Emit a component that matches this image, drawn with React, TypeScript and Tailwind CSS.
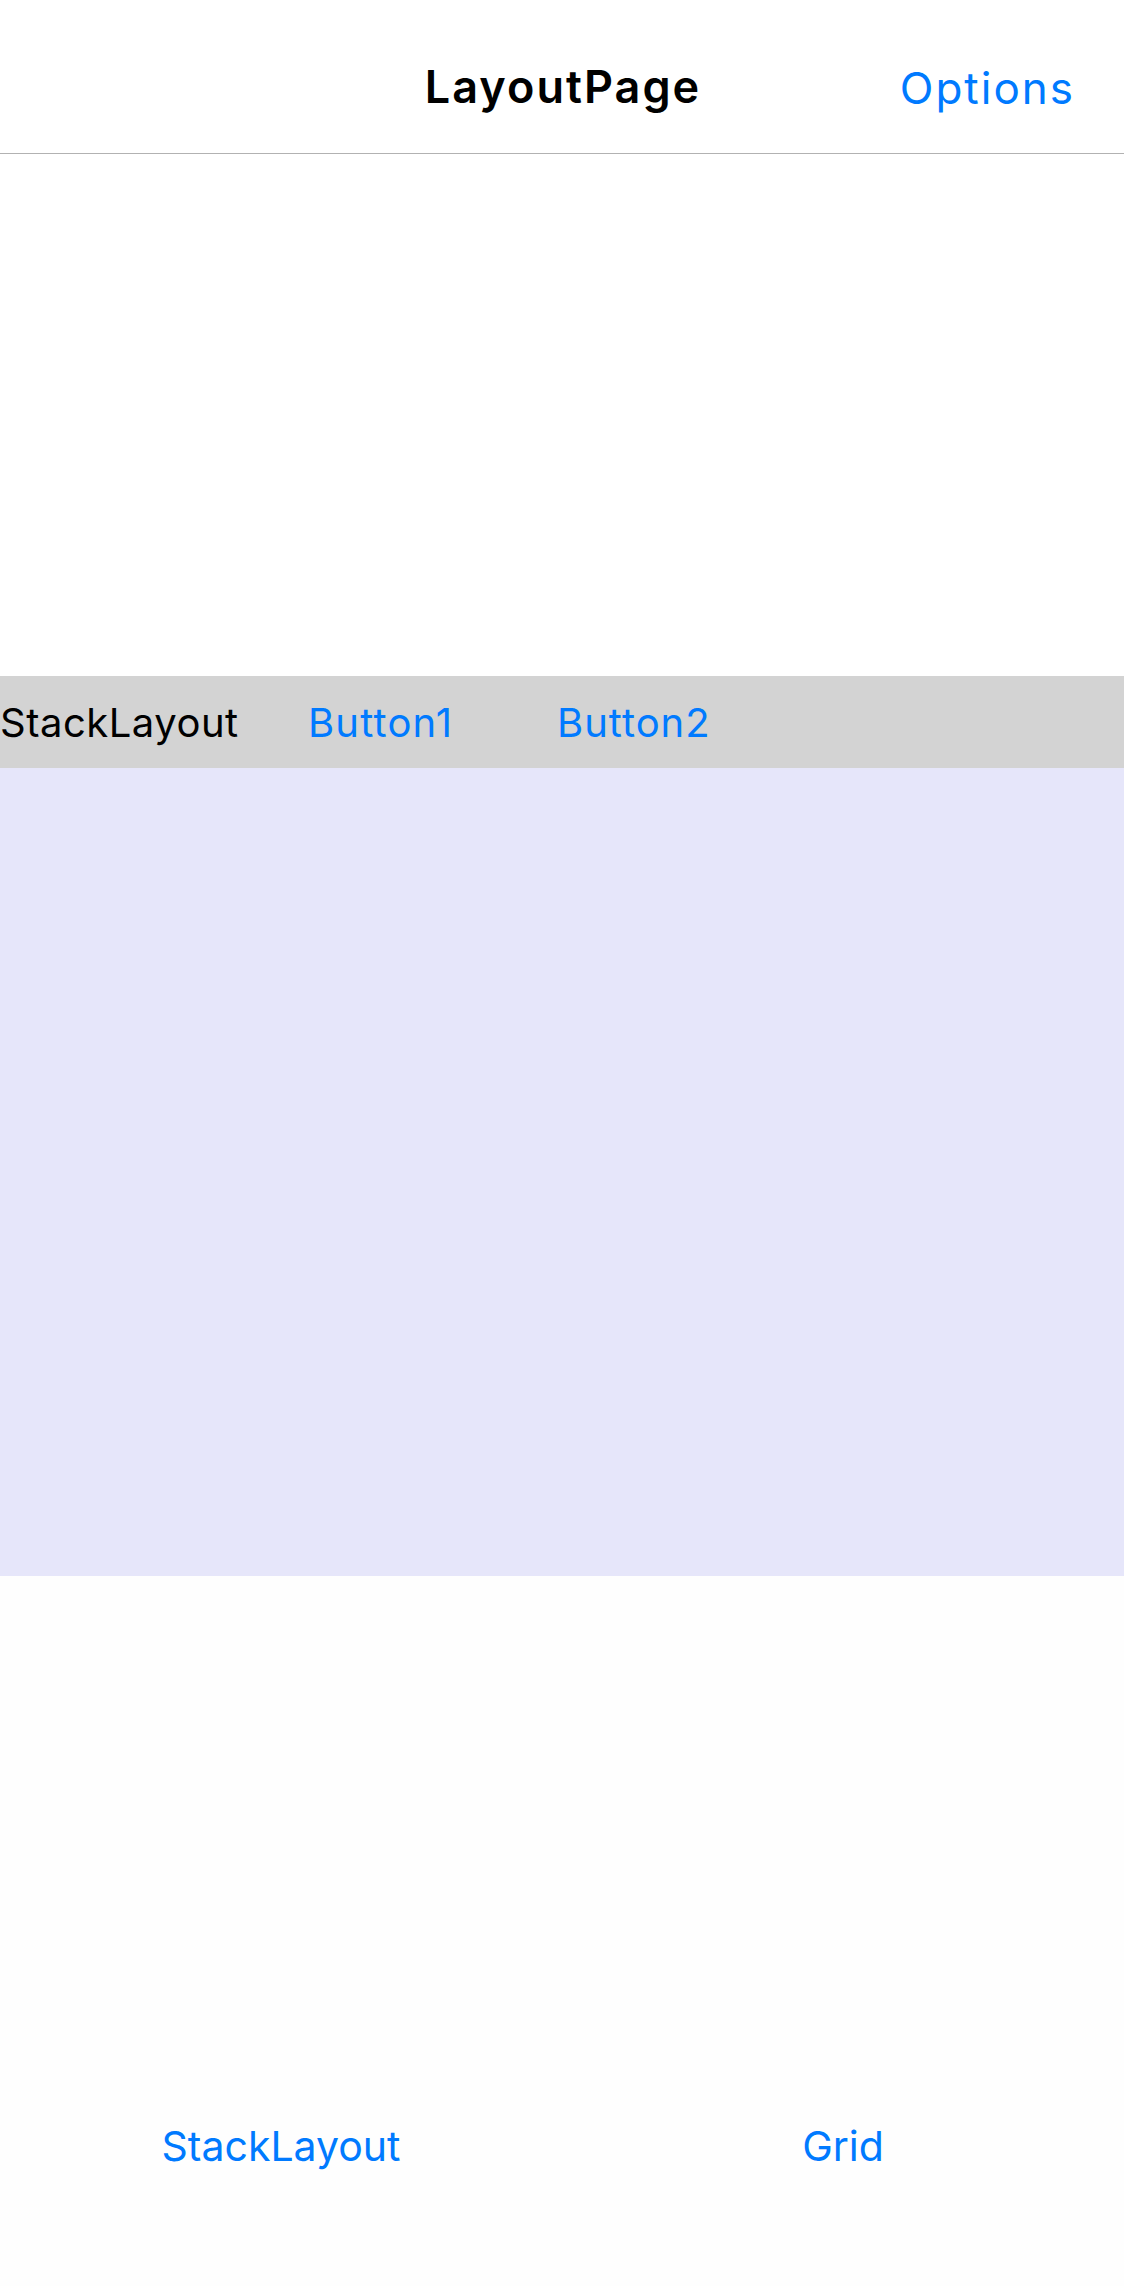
export default function App() {
  const font = { fontFamily: 'Inter, "Noto Sans", sans-serif' };
  return (
    <div className="w-[1124px] h-[2286px] flex flex-col bg-white" style={font}>
      <header className="h-[154px] shrink-0 grid grid-cols-[1fr_auto_1fr] items-start border-b border-[#b2b2b2] bg-white">
        <div />
        <div className="pt-[64px] pl-[2px] text-[45px] leading-none font-semibold tracking-[2px] text-black">LayoutPage</div>
        <div className="pt-[66px] pr-[49px] flex justify-end text-[44px] leading-none tracking-[2px] text-[#007aff]">Options</div>
      </header>
      <div className="h-[522px] shrink-0 bg-white" />
      <div className="h-[92px] shrink-0 flex items-center pt-[2px] bg-[#d3d3d3] text-[40px] leading-none">
        <div className="w-[308px] shrink-0 text-black tracking-[0.5px]">StackLayout</div>
        <div className="w-[249px] shrink-0 text-[#007aff] tracking-[1.2px]">Button1</div>
        <div className="shrink-0 text-[#007aff] tracking-[1px]">Button2</div>
      </div>
      <div className="h-[808px] shrink-0 bg-[#e6e6fa]" />
      <div className="flex-1 flex flex-col bg-[#fefefe]">
        <div className="h-[550px] shrink-0" />
        <nav className="grid grid-cols-2 text-[41px] leading-none text-[#007aff]">
          <div className="text-center">StackLayout</div>
          <div className="text-center">Grid</div>
        </nav>
      </div>
    </div>
  );
}
